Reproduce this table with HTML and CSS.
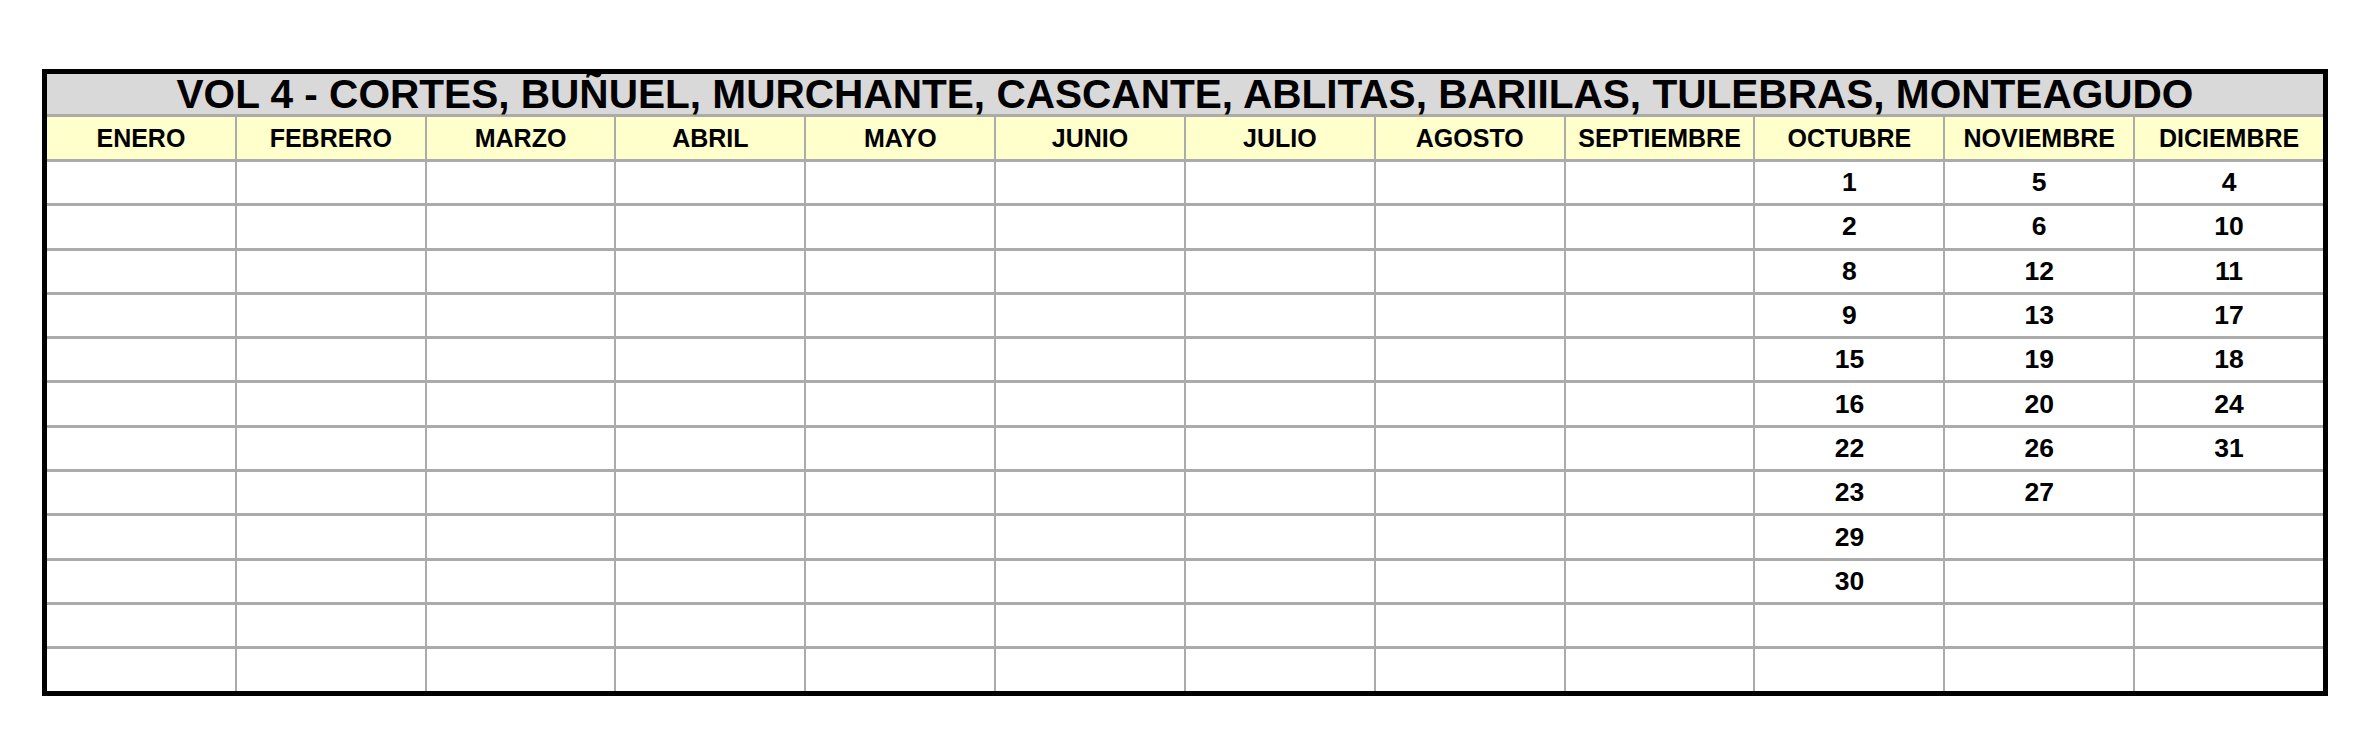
FILE: index.html
```html
<!DOCTYPE html>
<html lang="es">
<head>
<meta charset="utf-8">
<title>VOL 4 - Calendario</title>
<link rel="stylesheet" href="styles.css">
</head>
<body>
<div class="sheet">
  <div class="title">VOL 4 - CORTES, BUÑUEL, MURCHANTE, CASCANTE, ABLITAS, BARIILAS, TULEBRAS, MONTEAGUDO</div>

  <div class="head">ENERO</div><div class="head">FEBRERO</div><div class="head">MARZO</div><div class="head">ABRIL</div><div class="head">MAYO</div><div class="head">JUNIO</div><div class="head">JULIO</div><div class="head">AGOSTO</div><div class="head">SEPTIEMBRE</div><div class="head">OCTUBRE</div><div class="head">NOVIEMBRE</div><div class="head">DICIEMBRE</div>

  <div class="cell"></div><div class="cell"></div><div class="cell"></div><div class="cell"></div><div class="cell"></div><div class="cell"></div><div class="cell"></div><div class="cell"></div><div class="cell"></div><div class="cell">1</div><div class="cell">5</div><div class="cell">4</div>
  <div class="cell"></div><div class="cell"></div><div class="cell"></div><div class="cell"></div><div class="cell"></div><div class="cell"></div><div class="cell"></div><div class="cell"></div><div class="cell"></div><div class="cell">2</div><div class="cell">6</div><div class="cell">10</div>
  <div class="cell"></div><div class="cell"></div><div class="cell"></div><div class="cell"></div><div class="cell"></div><div class="cell"></div><div class="cell"></div><div class="cell"></div><div class="cell"></div><div class="cell">8</div><div class="cell">12</div><div class="cell">11</div>
  <div class="cell"></div><div class="cell"></div><div class="cell"></div><div class="cell"></div><div class="cell"></div><div class="cell"></div><div class="cell"></div><div class="cell"></div><div class="cell"></div><div class="cell">9</div><div class="cell">13</div><div class="cell">17</div>
  <div class="cell"></div><div class="cell"></div><div class="cell"></div><div class="cell"></div><div class="cell"></div><div class="cell"></div><div class="cell"></div><div class="cell"></div><div class="cell"></div><div class="cell">15</div><div class="cell">19</div><div class="cell">18</div>
  <div class="cell"></div><div class="cell"></div><div class="cell"></div><div class="cell"></div><div class="cell"></div><div class="cell"></div><div class="cell"></div><div class="cell"></div><div class="cell"></div><div class="cell">16</div><div class="cell">20</div><div class="cell">24</div>
  <div class="cell"></div><div class="cell"></div><div class="cell"></div><div class="cell"></div><div class="cell"></div><div class="cell"></div><div class="cell"></div><div class="cell"></div><div class="cell"></div><div class="cell">22</div><div class="cell">26</div><div class="cell">31</div>
  <div class="cell"></div><div class="cell"></div><div class="cell"></div><div class="cell"></div><div class="cell"></div><div class="cell"></div><div class="cell"></div><div class="cell"></div><div class="cell"></div><div class="cell">23</div><div class="cell">27</div><div class="cell"></div>
  <div class="cell"></div><div class="cell"></div><div class="cell"></div><div class="cell"></div><div class="cell"></div><div class="cell"></div><div class="cell"></div><div class="cell"></div><div class="cell"></div><div class="cell">29</div><div class="cell"></div><div class="cell"></div>
  <div class="cell"></div><div class="cell"></div><div class="cell"></div><div class="cell"></div><div class="cell"></div><div class="cell"></div><div class="cell"></div><div class="cell"></div><div class="cell"></div><div class="cell">30</div><div class="cell"></div><div class="cell"></div>
  <div class="cell"></div><div class="cell"></div><div class="cell"></div><div class="cell"></div><div class="cell"></div><div class="cell"></div><div class="cell"></div><div class="cell"></div><div class="cell"></div><div class="cell"></div><div class="cell"></div><div class="cell"></div>
  <div class="cell"></div><div class="cell"></div><div class="cell"></div><div class="cell"></div><div class="cell"></div><div class="cell"></div><div class="cell"></div><div class="cell"></div><div class="cell"></div><div class="cell"></div><div class="cell"></div><div class="cell"></div>
</div>
</body>
</html>
```

FILE: styles.css
```css
html, body {
  margin: 0;
  padding: 0;
  background: #ffffff;
}

body {
  font-family: "Liberation Sans", Arial, sans-serif;
  font-weight: bold;
  color: #000000;
}

.sheet {
  margin: 69px 0 0 42px;
  width: 2276px;
  border: 5px solid #000000;
  background: #ababab;
  display: grid;
  grid-template-columns: repeat(12, 1fr);
  grid-template-rows: 40px 42px repeat(12, 41.3px);
  column-gap: 2px;
  row-gap: 3px;
}

.title {
  grid-column: 1 / -1;
  background: #d9d9d9;
  font-size: 40.6px;
  line-height: 40px;
  text-align: center;
  white-space: nowrap;
}

.head {
  background: #ffffcc;
  font-size: 25px;
  display: flex;
  align-items: center;
  justify-content: center;
  white-space: nowrap;
}

.cell {
  background: #ffffff;
  font-size: 26.5px;
  display: flex;
  align-items: center;
  justify-content: center;
}
```
